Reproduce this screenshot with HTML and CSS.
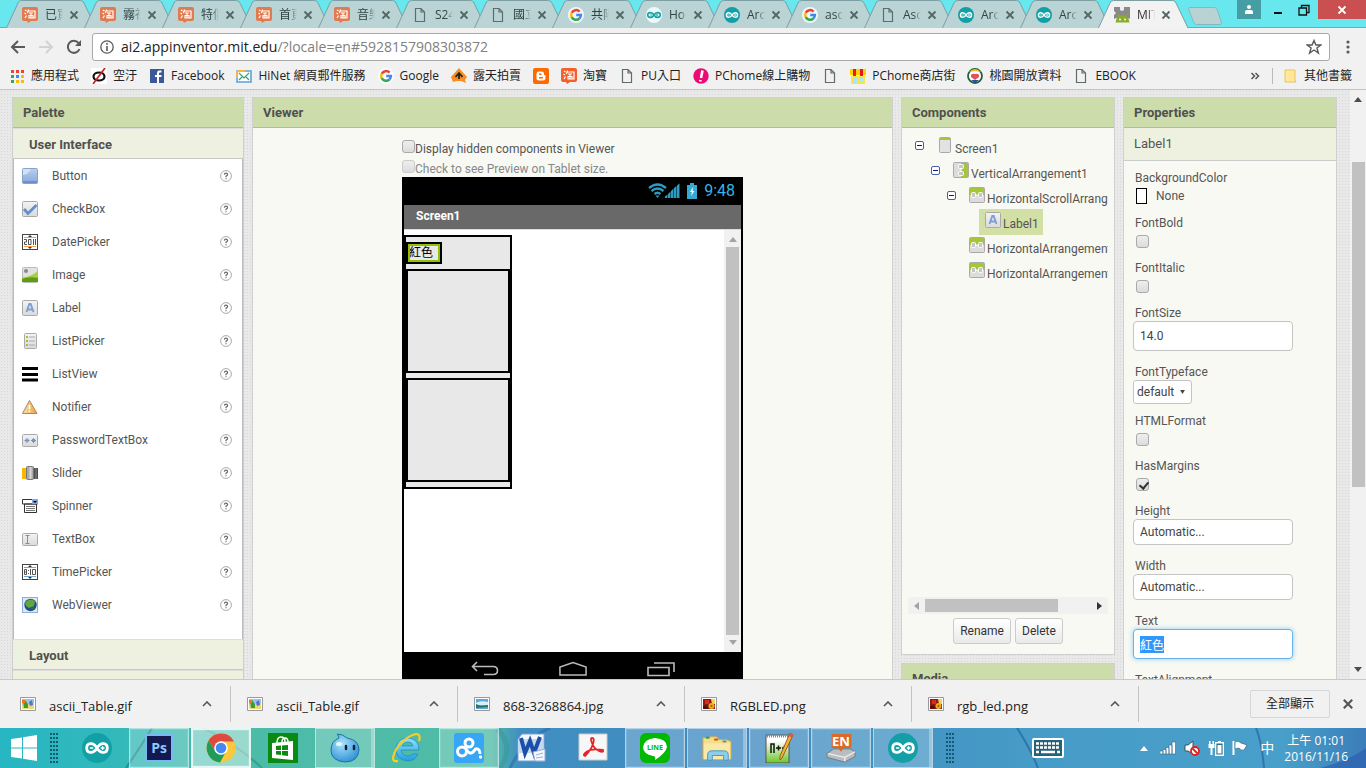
FILE: index.html
```html
<!DOCTYPE html>
<html lang="zh-Hant">
<head>
<meta charset="utf-8">
<title>MIT App Inventor 2</title>
<link rel="stylesheet" href="styles.css">
</head>
<body>
<svg class="defs" aria-hidden="true">
  <defs>
    <linearGradient id="g-blue" x1="0" y1="0" x2="0" y2="1"><stop offset="0" stop-color="#b9cfee"/><stop offset="1" stop-color="#85a9dc"/></linearGradient>
    <linearGradient id="g-grey" x1="0" y1="0" x2="0" y2="1"><stop offset="0" stop-color="#f3f3f3"/><stop offset="1" stop-color="#dadada"/></linearGradient>
    <linearGradient id="g-warn" x1="0" y1="0" x2="1" y2="0"><stop offset="0" stop-color="#fbe3b0"/><stop offset="1" stop-color="#f0a03c"/></linearGradient>
    <linearGradient id="g-np" x1="0" y1="0" x2="0" y2="1"><stop offset=".2" stop-color="#fff"/><stop offset="1" stop-color="#6cc52a"/></linearGradient>
    <radialGradient id="g-drop" cx=".4" cy=".35" r=".8"><stop offset="0" stop-color="#a9e2fb"/><stop offset="1" stop-color="#1c86cf"/></radialGradient>
    <linearGradient id="g-ie" x1="0" y1="0" x2="0" y2="1"><stop offset="0" stop-color="#8fe0fb"/><stop offset="1" stop-color="#1f9fe0"/></linearGradient>
  </defs>
  <symbol id="tab" viewBox="0 0 91 28"><path d="M.5 28 12 3Q13 .5 15.500 .5H74.500Q77 .5 78 3L90 28" stroke="#7d9ea2"/></symbol>
  <symbol id="close" viewBox="0 0 10 10"><path d="M1.500 1.500 8.500 8.500M8.500 1.500 1.500 8.500" fill="none" stroke="currentColor" stroke-width="1.800"/></symbol>
  <symbol id="page" viewBox="0 0 16 16"><path d="M3.500 1.500H9L12.500 5V14.500H3.500ZM9 1.500V5H12.500" fill="none" stroke="#5f6b6d" stroke-width="1.200"/></symbol>
  <symbol id="taobao" viewBox="0 0 16 16"><path d="M2 0H14Q16 0 16 2V12Q16 14 14 14H9L6 16 5 14H2Q0 14 0 12V2Q0 0 2 0Z" fill="currentColor"/><path d="M3 3 4.500 4M2.500 6 4 7M3 11 4.500 8.500M6.500 2.500 5.500 6M6 4H13V11H11M7 6H11M6.500 8.500H11.500M9 6V11M7 9V11H11V9" fill="none" stroke="#fff" stroke-width="1.200"/></symbol>
  <symbol id="google" viewBox="0 0 16 16"><circle cx="8" cy="8" r="8" fill="#fff" fill-opacity=".8"/><g fill="none" stroke-width="2.500"><path d="M11.600 4.600A4.900 4.900 0 0 0 3.700 5.800" stroke="#ea4335"/><path d="M3.700 5.700A5 5 0 0 0 3.700 10.300" stroke="#fbbc05"/><path d="M3.700 10.200A4.900 4.900 0 0 0 11.400 11.500" stroke="#34a853"/><path d="M11.400 11.500A5 5 0 0 0 12.900 8H8.200" stroke="#4285f4"/></g></symbol>
  <symbol id="ard" viewBox="0 0 16 16"><circle cx="8" cy="8" r="8" fill="#12a0a6"/><path d="M8 8C6 4.500 2.500 5.200 2.500 8S6 11.500 8 8 13.500 5.200 13.500 8 10 11.500 8 8Z" fill="none" stroke="#fff" stroke-width="1.500"/><path d="M4.200 8H6M10 8H12M11 7V9" stroke="#fff" stroke-width=".7"/></symbol>
  <symbol id="ard-light" viewBox="0 0 16 16"><circle cx="8" cy="8" r="8" fill="#eafafa"/><path d="M8 8C6 4.500 1.700 5.200 1.700 8S6 11.500 8 8 14.300 5.200 14.300 8 10 11.500 8 8Z" fill="none" stroke="#17a2a8" stroke-width="1.600"/><path d="M3.800 8H6M10 8H12M11 7V9" stroke="#17a2a8" stroke-width=".8"/></symbol>
  <symbol id="mit" viewBox="0 0 16 16"><path d="M0 0H16V12H0V8L2 6 0 4Z" fill="#8a8a8a"/><path d="M6 0V3L8 4 10 3V0Z" fill="#eee"/><path d="M0 16V12L2 11H14L16 12V16Z" fill="#f2f2f2"/><path d="M1.500 15.500Q2 8.500 8.500 8.500T15.500 15.500Z" fill="#8aad2c"/><path d="M4 7 5.500 10M13 7 11.500 10" stroke="#8aad2c"/><circle cx="6" cy="12.500" r=".9" fill="#fff"/><circle cx="11" cy="12.500" r=".9" fill="#fff"/></symbol>
  <symbol id="help" viewBox="0 0 12 12"><circle cx="6" cy="6" r="5.400" fill="#fff" stroke="#aaa"/><path d="M4.400 4.600Q4.500 3.200 6 3.200T7.600 4.500Q7.600 5.300 6 6.200V7.200M6 8.200V9.300" fill="none" stroke="#666" stroke-width="1.200"/></symbol>
  <symbol id="label" viewBox="0 0 16 16"><rect x=".5" y=".5" width="15" height="15" rx="1" fill="url(#g-grey)" stroke="#aaa"/><path d="M4.500 12 7.300 4H8.700L11.500 12M5.800 9.500H10.200" fill="none" stroke="#7e9fd3" stroke-width="1.900"/></symbol>
  <symbol id="harr" viewBox="0 0 16 16"><rect x=".5" y=".5" width="15" height="15" rx="1" fill="#dcdcdc" stroke="#aaa"/><path d="M1 1H15V8H1Z" fill="#a5c639"/><path d="M6 8H10" stroke="#fff"/><rect x="2.500" y="5.500" width="4" height="5" rx="1" fill="#c6c6c6" stroke="#fff"/><rect x="9.500" y="5.500" width="4" height="5" rx="1" fill="#c6c6c6" stroke="#fff"/></symbol>
  <symbol id="minus" viewBox="0 0 9 9"><rect x=".5" y=".5" width="8" height="8" rx="1.500" fill="#fff" stroke="#4560a8"/><path d="M2 4.500H7" stroke="#0a1e8c"/></symbol>
  <symbol id="chev" viewBox="0 0 10 6"><path d="M1 5 5 1 9 5" fill="none" stroke="#555" stroke-width="1.600"/></symbol>
  <symbol id="pic" viewBox="0 0 16 14"><path d="M.5 .5H15.500V13.500H.5Z" fill="#fff" stroke="#999"/><path d="M2 2H14V12H2Z" fill="#9cc3e8"/><path d="M2 8 6 5 10 8 14 6V12H2Z" fill="#ecd878"/><path d="M3 4 5 3 8 7V11H4Z" fill="#3c9c35"/><path d="M2 3H5V6H2Z" fill="#e97a1f"/><path d="M9 5 12 3 13 8 10 9Z" fill="#5474cf"/></symbol>
  <symbol id="pic-sea" viewBox="0 0 16 14"><path d="M.5 .5H15.500V13.500H.5Z" fill="#fff" stroke="#999"/><path d="M2 2H14V12H2Z" fill="#5da8dd"/><path d="M2 6Q6 3 14 5V8H2Z" fill="#d9eefa"/><path d="M2 7 7 9 14 8V10L2 11Z" fill="#27766e"/></symbol>
  <symbol id="pic-red" viewBox="0 0 16 14"><path d="M.5 .5H15.500V13.500H.5Z" fill="#fff" stroke="#999"/><path d="M2 2H14V12H2Z" fill="#8c1b12"/><path d="M4 3H8V7H4Z" fill="#d92b1c"/><path d="M10 2H14V7H11Z" fill="#f4d35a"/><circle cx="10.500" cy="9" r="3" fill="#efa81c"/><circle cx="10.500" cy="9" r="1" fill="#8a5a10"/><path d="M2 9 6 8 7 12H2Z" fill="#551009"/></symbol>
</svg>

<header class="browser">
  <div class="tabstrip">
    <nav class="tabs" aria-label="Tabs">
      <div class="tab"><svg class="tab-bg"><use href="#tab"/></svg><svg class="fav tb"><use href="#taobao"/></svg><a href="#t1">已買</a><button aria-label="Close"><svg><use href="#close"/></svg></button></div>
      <div class="tab"><svg class="tab-bg"><use href="#tab"/></svg><svg class="fav tb"><use href="#taobao"/></svg><a href="#t2">霧社</a><button aria-label="Close"><svg><use href="#close"/></svg></button></div>
      <div class="tab"><svg class="tab-bg"><use href="#tab"/></svg><svg class="fav tb"><use href="#taobao"/></svg><a href="#t3">特價</a><button aria-label="Close"><svg><use href="#close"/></svg></button></div>
      <div class="tab"><svg class="tab-bg"><use href="#tab"/></svg><svg class="fav tb"><use href="#taobao"/></svg><a href="#t4">首頁</a><button aria-label="Close"><svg><use href="#close"/></svg></button></div>
      <div class="tab"><svg class="tab-bg"><use href="#tab"/></svg><svg class="fav tb"><use href="#taobao"/></svg><a href="#t5">音樂</a><button aria-label="Close"><svg><use href="#close"/></svg></button></div>
      <div class="tab"><svg class="tab-bg"><use href="#tab"/></svg><svg class="fav"><use href="#page"/></svg><a href="#t6">S24</a><button aria-label="Close"><svg><use href="#close"/></svg></button></div>
      <div class="tab"><svg class="tab-bg"><use href="#tab"/></svg><svg class="fav"><use href="#page"/></svg><a href="#t7">國立</a><button aria-label="Close"><svg><use href="#close"/></svg></button></div>
      <div class="tab"><svg class="tab-bg"><use href="#tab"/></svg><svg class="fav"><use href="#google"/></svg><a href="#t8">共陽</a><button aria-label="Close"><svg><use href="#close"/></svg></button></div>
      <div class="tab"><svg class="tab-bg"><use href="#tab"/></svg><svg class="fav"><use href="#ard-light"/></svg><a href="#t9">Ho</a><button aria-label="Close"><svg><use href="#close"/></svg></button></div>
      <div class="tab"><svg class="tab-bg"><use href="#tab"/></svg><svg class="fav"><use href="#ard"/></svg><a href="#t10">Arc</a><button aria-label="Close"><svg><use href="#close"/></svg></button></div>
      <div class="tab"><svg class="tab-bg"><use href="#tab"/></svg><svg class="fav"><use href="#google"/></svg><a href="#t11">asc</a><button aria-label="Close"><svg><use href="#close"/></svg></button></div>
      <div class="tab"><svg class="tab-bg"><use href="#tab"/></svg><svg class="fav"><use href="#page"/></svg><a href="#t12">Asc</a><button aria-label="Close"><svg><use href="#close"/></svg></button></div>
      <div class="tab"><svg class="tab-bg"><use href="#tab"/></svg><svg class="fav"><use href="#ard"/></svg><a href="#t13">Arc</a><button aria-label="Close"><svg><use href="#close"/></svg></button></div>
      <div class="tab"><svg class="tab-bg"><use href="#tab"/></svg><svg class="fav"><use href="#ard"/></svg><a href="#t14">Arc</a><button aria-label="Close"><svg><use href="#close"/></svg></button></div>
      <div class="tab current"><svg class="tab-bg"><use href="#tab"/></svg><svg class="fav"><use href="#mit"/></svg><a href="#t15">MIT</a><button aria-label="Close"><svg><use href="#close"/></svg></button></div>
    </nav>
    <button class="newtab" aria-label="New tab"><svg viewBox="0 0 34 18"><path d="M2 .5H26Q28 .5 29 2L33.500 16Q33.500 17.500 32 17.500H9Q7 17.500 6 16L.5 2Q.5 .5 2 .5Z" fill="#b9d3d5" stroke="#86b9be"/></svg></button>
    <div class="winctl">
      <button class="user" aria-label="User"><svg viewBox="0 0 12 12"><circle cx="6" cy="3" r="2" fill="#fff"/><path d="M2 10V8Q2 6 4 6H8Q10 6 10 8V10Z" fill="#fff"/></svg></button>
      <button class="min" aria-label="Minimize"><svg viewBox="0 0 12 12"><path d="M2 9H10" stroke="#111" stroke-width="2"/></svg></button>
      <button class="max" aria-label="Restore"><svg viewBox="0 0 12 12"><path d="M1 4H8.500V11H1ZM3.500 4V1.500H11V8.500H8.500" fill="none" stroke="#111" stroke-width="1.300"/></svg></button>
      <button class="x" aria-label="Close window"><svg viewBox="0 0 10 10"><use href="#close"/></svg></button>
    </div>
  </div>
  <div class="toolbar">
    <button aria-label="Back"><svg viewBox="0 0 16 16"><path d="M15 8H2M8 2 2 8 8 14" fill="none" stroke="#5a5a5a" stroke-width="2"/></svg></button>
    <button aria-label="Forward"><svg viewBox="0 0 16 16"><path d="M1 8H14M8 2 14 8 8 14" fill="none" stroke="#d3d3d3" stroke-width="2"/></svg></button>
    <button aria-label="Reload"><svg viewBox="0 0 16 16"><path d="M13.500 10A6 6 0 1 1 12.500 4" fill="none" stroke="#5a5a5a" stroke-width="2"/><path d="M15 1V7H9Z" fill="#5a5a5a"/></svg></button>
    <div class="address">
      <svg viewBox="0 0 14 14"><circle cx="7" cy="7" r="6.200" fill="none" stroke="#5a5a5a" stroke-width="1.300"/><path d="M7 6V11M7 3V4.800" stroke="#5a5a5a" stroke-width="1.600"/></svg>
      <span class="url">ai2.appinventor.mit.edu<i>/?locale=en#5928157908303872</i></span>
      <button aria-label="Bookmark"><svg viewBox="0 0 16 16"><path d="M8 1.500 9.900 6H14.800L10.900 9 12.400 14 8 11 3.600 14 5.100 9 1.200 6H6.100Z" fill="none" stroke="#5a5a5a" stroke-width="1.400"/></svg></button>
    </div>
    <button class="more" aria-label="Menu"><svg viewBox="0 0 4 14"><circle cx="2" cy="2" r="1.600"/><circle cx="2" cy="7" r="1.600"/><circle cx="2" cy="12" r="1.600"/></svg></button>
  </div>
  <nav class="bookmarks" aria-label="Bookmarks">
    <a href="#b1"><svg viewBox="0 0 16 16"><path d="M2 2H5V5H2ZM7 2H10V5H7ZM12 2H15V5H12Z" fill="#ea4335"/><path d="M2 7H5V10H2ZM2 12H5V15H2Z" fill="#34a853"/><path d="M7 7H10V10H7Z" fill="#4285f4"/><path d="M12 7H15V10H12ZM12 12H15V15H12ZM7 12H10V15H7Z" fill="#fbbc05"/></svg>應用程式</a>
    <a href="#b2"><svg viewBox="0 0 16 16"><path d="M0 0H16V16H0Z" fill="#fff"/><ellipse cx="8" cy="8.500" rx="5.500" ry="4" fill="none" stroke="#111" stroke-width="2.200"/><path d="M2 16 14 0" stroke="#c92222" stroke-width="1.700"/></svg>空汙</a>
    <a href="#b3"><svg viewBox="0 0 16 16"><path d="M1 1H15V15H1Z" fill="#3b5998"/><path d="M10 15V9H12.500V7H10V5.500Q10 4.500 11 4.500H12.500V2.500H10.500Q8 2.500 8 5V7H6V9H8V15Z" fill="#fff"/></svg>Facebook</a>
    <a href="#b4"><svg viewBox="0 0 16 16"><path d="M1 3H15V14H1Z" fill="#fff" stroke="#5ba3d4" stroke-width="1.600"/><path d="M1 3H9M1 3V10" fill="none" stroke="#f6b545" stroke-width="1.800"/><path d="M3 5 8 10 13 5M3 12 6 9M13 12 10 9" fill="none" stroke="#3f9f74" stroke-width="1.200"/></svg>HiNet 網頁郵件服務</a>
    <a href="#b5"><svg><use href="#google"/></svg>Google</a>
    <a href="#b6"><svg viewBox="0 0 16 16"><path d="M8 0 16 9 14 12 15 15 10 13H6L2 14 0 9Z" fill="#f98e1e"/><path d="M4.500 9 8 5 11.500 9M8 6V11" fill="none" stroke="#222" stroke-width="1.800"/></svg>露天拍賣</a>
    <a href="#b7" aria-label="Blogger"><svg viewBox="0 0 16 16"><rect width="16" height="16" rx="2" fill="#ff6a00"/><path d="M6 3.500H8.500Q11 3.500 11 6V7H12.500V10Q12.500 12.500 10 12.500H6Q3.500 12.500 3.500 10V6Q3.500 3.500 6 3.500Z" fill="#fff"/><path d="M6 6.200H8.500M6 9.800H10" stroke="#ff6a00" stroke-width="1.500"/></svg></a>
    <a href="#b8"><svg class="tb hot"><use href="#taobao"/></svg>淘寶</a>
    <a href="#b9"><svg><use href="#page"/></svg>PU入口</a>
    <a href="#b10"><svg viewBox="0 0 16 16"><circle cx="8" cy="8" r="7.700" fill="#ea0b74"/><path d="M9.500 2.500 8 10M7.500 12 7.200 13.500" stroke="#fff" stroke-width="2.600"/></svg>PChome線上購物</a>
    <a href="#b11" aria-label="Page"><svg><use href="#page"/></svg></a>
    <a href="#b12"><svg viewBox="0 0 16 16"><path d="M0 1H16V7H0Z" fill="#ffd200"/><path d="M3 1H6V8H3ZM10 1H13V8H10Z" fill="#e41a1a"/><path d="M1 8H15V16H1Z" fill="#ffe24a"/><path d="M3 9H7V16H3ZM9 9H13V13H9Z" fill="#a5e8f3"/></svg>PChome商店街</a>
    <a href="#b13"><svg viewBox="0 0 16 16"><circle cx="8" cy="8" r="7" fill="#fff" stroke="#24603a" stroke-width="1.800"/><path d="M2 4Q8-2 14 4L8 3Z" fill="#e3c434"/><path d="M4 7Q5 5 8 6 11 5 12 7V9L8 12 4 9Z" fill="#e4505c"/><path d="M4 12 8 15 12 12" fill="#29509a"/></svg>桃園開放資料</a>
    <a href="#b14"><svg><use href="#page"/></svg>EBOOK</a>
    <button class="overflow" aria-label="More bookmarks"><svg viewBox="0 0 10 10"><path d="M1.500 2 4.500 5 1.500 8M5.500 2 8.500 5 5.500 8" fill="none" stroke="#555" stroke-width="1.500"/></svg></button>
    <a class="other" href="#b15"><svg viewBox="0 0 16 16"><path d="M3 2H13V12L14 14H3Z" fill="#ffe79b" stroke="#e8c65a"/></svg>其他書籤</a>
  </nav>
</header>

<main class="viewport">
  <div class="workspace">
    <section class="panel">
      <h2>Palette</h2>
      <h3>User Interface</h3>
      <ul class="palette">
        <li><svg viewBox="0 0 16 16"><rect x=".5" y=".5" width="15" height="15" rx="1" fill="url(#g-blue)" stroke="#8aa3c8"/><path d="M1 1H9Q7 6 1 7Z" fill="#d3e1f5"/><path d="M1 14H15" stroke="#5f88c4" stroke-width="1.500"/></svg><a href="#c1">Button</a><svg class="help"><use href="#help"/></svg></li>
        <li><svg viewBox="0 0 16 16"><rect x=".5" y=".5" width="15" height="15" rx="1" fill="url(#g-grey)" stroke="#aaa"/><path d="M2 8 6 12.500 14.500 4" fill="none" stroke="#648fcf" stroke-width="2.800"/></svg><a href="#c2">CheckBox</a><svg class="help"><use href="#help"/></svg></li>
        <li><svg viewBox="0 0 16 16"><rect x=".5" y=".5" width="15" height="15" fill="#fff" stroke="#444"/><path d="M2 3.500H14M2 12.500H14" stroke="#f2a14a"/><path d="M6 3 8 1 10 3ZM6 13 8 15 10 13Z" fill="#333"/><path d="M2 5.500H4.500V8H2.500V10.500H5M6.500 5.500H9V10.500H6.500ZM11.500 5V11M13.500 5V11" fill="none" stroke="#555"/></svg><a href="#c3">DatePicker</a><svg class="help"><use href="#help"/></svg></li>
        <li><svg viewBox="0 0 16 16"><rect x=".5" y=".5" width="15" height="15" rx="1" fill="#e2e2e2" stroke="#bbb"/><circle cx="4" cy="4" r="2" fill="#888"/><path d="M0 10Q7 11 16 4V15H0Z" fill="#a7cf45"/><path d="M0 12Q7 9 16 11V15H0Z" fill="#5f9c0e"/></svg><a href="#c4">Image</a><svg class="help"><use href="#help"/></svg></li>
        <li><svg><use href="#label"/></svg><a href="#c5">Label</a><svg class="help"><use href="#help"/></svg></li>
        <li><svg viewBox="0 0 16 16"><rect x="2.500" y=".5" width="12" height="15" rx="1" fill="url(#g-grey)" stroke="#aaa"/><path d="M4 3H6V5H4ZM4 7H6V9H4ZM4 11H6V13H4Z" fill="#9dc433"/><path d="M7 4H13M7 8H13M7 12H13" stroke="#aaa"/></svg><a href="#c6">ListPicker</a><svg class="help"><use href="#help"/></svg></li>
        <li><svg viewBox="0 0 16 16"><path d="M0 2.500H16M0 8.500H16M0 14H16" stroke="#000" stroke-width="3"/></svg><a href="#c7">ListView</a><svg class="help"><use href="#help"/></svg></li>
        <li><svg viewBox="0 0 16 16"><path d="M7.500 1.500 15 14.500H.5Z" fill="url(#g-warn)" stroke="#a58a5c"/><path d="M7.500 6V10M7.500 11.500V13" stroke="#fff" stroke-width="1.600"/></svg><a href="#c8">Notifier</a><svg class="help"><use href="#help"/></svg></li>
        <li><svg viewBox="0 0 16 16"><rect x=".5" y="2.500" width="15" height="12" rx="1" fill="url(#g-grey)" stroke="#aaa"/><path d="M5 6V11M2.500 8.500H7.500M3.500 7 6.500 10M6.500 7 3.500 10M11.500 6V11M9 8.500H14M10 7 13 10M13 7 10 10" stroke="#7394cb"/></svg><a href="#c9">PasswordTextBox</a><svg class="help"><use href="#help"/></svg></li>
        <li><svg viewBox="0 0 16 16"><path d="M0 3H5V14H0Z" fill="#f6b900"/><path d="M11 3H16V14H11Z" fill="#4d4d4d"/><path d="M14 3V14" stroke="#888"/><rect x="4.500" y="1.500" width="7" height="13" rx="1" fill="#aaa" stroke="#777"/><path d="M8.500 2V14" stroke="#d8d8d8" stroke-width="2"/></svg><a href="#c10">Slider</a><svg class="help"><use href="#help"/></svg></li>
        <li><svg viewBox="0 0 16 16"><path d="M.5 1.500H15.500V6H.5ZM2.500 6H14.500V14.500H2.500Z" fill="#fff" stroke="#333"/><path d="M10 1H16V6H10Z" fill="#83a4dd"/><path d="M11 3H15L13 5Z" fill="#000"/><path d="M4 8.500H13M4 10.500H13M4 12.500H13" stroke="#777"/></svg><a href="#c11">Spinner</a><svg class="help"><use href="#help"/></svg></li>
        <li><svg viewBox="0 0 16 16"><rect x=".5" y="2.500" width="15" height="12" rx="1" fill="url(#g-grey)" stroke="#aaa"/><path d="M3.500 4.500H7.500M5.500 4.500V12.500M3.500 12.500H7.500" stroke="#738fbd"/></svg><a href="#c12">TextBox</a><svg class="help"><use href="#help"/></svg></li>
        <li><svg viewBox="0 0 16 16"><rect x=".5" y=".5" width="15" height="15" fill="#fff" stroke="#444"/><path d="M2 3.500H14M2 12.500H14" stroke="#6ea5d6"/><path d="M6 3 8 1 10 3ZM6 13 8 15 10 13Z" fill="#333"/><path d="M2.500 5.500H4.500V10.500H2.500ZM2.500 8H4.500M6.500 6V7M6.500 9V10M8.500 5V11M10.500 5.500H13.500V10.500H10.500Z" fill="none" stroke="#555"/></svg><a href="#c13">TimePicker</a><svg class="help"><use href="#help"/></svg></li>
        <li><svg viewBox="0 0 16 16"><rect x=".5" y=".5" width="15" height="15" fill="#dce8f5" stroke="#8eafd8"/><circle cx="8.500" cy="8" r="6.200" fill="#224e8a"/><path d="M3 6Q7 0 13 4L12 9 7 11 4 9Z" fill="#5fa83a"/><path d="M8 11 13 10 11 13Z" fill="#2f7024"/></svg><a href="#c14">WebViewer</a><svg class="help"><use href="#help"/></svg></li>
      </ul>
      <h3>Layout</h3>
      <h3>Media</h3>
    </section>

    <section class="panel viewer">
      <h2>Viewer</h2>
      <div class="stage">
        <label class="opt"><input type="checkbox"><span>Display hidden components in Viewer</span></label>
        <label class="opt off"><input type="checkbox" disabled><span>Check to see Preview on Tablet size.</span></label>
        <div class="phone">
          <div class="status">
            <svg class="wifi" viewBox="0 0 32 16"><g fill="none" stroke="#2d9cc4" stroke-width="2.300"><path d="M1 5Q9.500-2 18 5M3.500 8Q9.500 3 15.500 8M6.500 11Q9.500 8.500 12.500 11"/></g><path d="M7.500 12.500H11.500L9.500 15Z" fill="#2d9cc4"/><path d="M17 15V13.500L19.500 11.500V15ZM20 15V11L22.500 8.500V15ZM23 15V8L25.500 5.500V15ZM26 15V5L28.500 3V15ZM29 15V2.500L31.500 .5V15Z" fill="#2d9cc4"/></svg>
            <svg class="batt" viewBox="0 0 10 16"><path d="M0 2H3V0H7V2H10V16H0Z" fill="#37a9d3"/><path d="M6 4 3 9H5L4 13 7.500 8H5.500Z" fill="#fff"/></svg>
            <span>9:48</span>
          </div>
          <div class="title">Screen1</div>
          <div class="screen">
            <div class="canvas">
              <div class="varr">
                <div class="hscroll"><span class="picked">紅色</span></div>
                <div class="harr"></div>
                <div class="harr"></div>
              </div>
            </div>
            <div class="vbar dim"><svg viewBox="0 0 8 5"><path d="M0 5 4 0 8 5Z"/></svg><div class="thumb"></div><svg viewBox="0 0 8 5"><path d="M0 0 4 5 8 0Z"/></svg></div>
          </div>
          <div class="keys">
            <svg viewBox="0 0 28 16"><path d="M6 1 1.500 5.500 6 10M1.500 5.500H22Q26.500 5.500 26.500 9.500T22 13.500H13" fill="none" stroke="#bbb" stroke-width="1.600"/></svg>
            <svg viewBox="0 0 30 16"><path d="M1 14.500V6L15 1 29 6V14.500Z" fill="none" stroke="#bbb" stroke-width="1.600"/></svg>
            <svg viewBox="0 0 28 16"><path d="M1 6.500H22V14.500H1ZM7 2H27V11" fill="none" stroke="#bbb" stroke-width="1.600"/></svg>
          </div>
        </div>
      </div>
    </section>

    <div class="column">
      <section class="panel">
        <h2>Components</h2>
        <div class="tree">
          <ul>
            <li><div class="row"><svg class="tog"><use href="#minus"/></svg><a class="node" href="#n1"><svg viewBox="0 0 16 16"><rect x="2.500" y=".5" width="11" height="15" rx="1" fill="#e2e2e2" stroke="#aaa"/><path d="M3 1H13V3H3Z" fill="#a5c639"/></svg><span>Screen1</span></a></div>
              <ul>
                <li><div class="row"><svg class="tog"><use href="#minus"/></svg><a class="node" href="#n2"><svg viewBox="0 0 16 16"><rect x=".5" y=".5" width="15" height="15" rx="1" fill="#dcdcdc" stroke="#aaa"/><path d="M8 1H15V15H8Z" fill="#a5c639"/><path d="M8 6V10" stroke="#fff"/><rect x="5.500" y="2.500" width="5" height="4" rx="1" fill="#c6c6c6" stroke="#fff"/><rect x="5.500" y="9.500" width="5" height="4" rx="1" fill="#c6c6c6" stroke="#fff"/></svg><span>VerticalArrangement1</span></a></div>
                  <ul>
                    <li><div class="row"><svg class="tog"><use href="#minus"/></svg><a class="node" href="#n3"><svg><use href="#harr"/></svg><span>HorizontalScrollArrangement1</span></a></div>
                      <ul><li><div class="row"><i class="tog"></i><a class="node sel" href="#n4"><svg><use href="#label"/></svg><span>Label1</span></a></div></li></ul>
                    </li>
                    <li><div class="row"><i class="tog"></i><a class="node" href="#n5"><svg><use href="#harr"/></svg><span>HorizontalArrangement1</span></a></div></li>
                    <li><div class="row"><i class="tog"></i><a class="node" href="#n6"><svg><use href="#harr"/></svg><span>HorizontalArrangement2</span></a></div></li>
                  </ul>
                </li>
              </ul>
            </li>
          </ul>
        </div>
        <div class="hbar"><svg class="faint" viewBox="0 0 5 8"><path d="M5 0 0 4 5 8Z"/></svg><div class="track"><div class="thumb"></div></div><svg viewBox="0 0 5 8"><path d="M0 0 5 4 0 8Z"/></svg></div>
        <div class="actions"><button>Rename</button><button>Delete</button></div>
      </section>
      <section class="panel"><h2>Media</h2></section>
    </div>

    <section class="panel">
      <h2>Properties</h2>
      <p class="subject">Label1</p>
      <form class="props">
        <div class="prop"><label for="bg">BackgroundColor</label><button type="button" id="bg" class="color"><i></i>None</button></div>
        <div class="prop"><label for="bold">FontBold</label><div class="check"><input type="checkbox" id="bold"></div></div>
        <div class="prop"><label for="ital">FontItalic</label><div class="check"><input type="checkbox" id="ital"></div></div>
        <div class="prop wide"><label for="size">FontSize</label><input type="text" id="size" value="14.0"></div>
        <div class="prop"><label for="face">FontTypeface</label><div class="select"><select id="face"><option>default</option></select><svg viewBox="0 0 6 5"><path d="M0 0H6L3 5Z"/></svg></div></div>
        <div class="prop"><label for="html">HTMLFormat</label><div class="check"><input type="checkbox" id="html"></div></div>
        <div class="prop"><label for="marg">HasMargins</label><div class="check"><input type="checkbox" id="marg" checked></div></div>
        <div class="prop wide"><label for="hgt">Height</label><button type="button" class="dim-btn" id="hgt">Automatic...</button></div>
        <div class="prop wide"><label for="wid">Width</label><button type="button" class="dim-btn" id="wid">Automatic...</button></div>
        <div class="prop wide"><label for="txt">Text</label><input type="text" id="txt" value="紅色"></div>
        <div class="prop"><label for="align">TextAlignment</label><div class="select"><select id="align"><option>left</option></select></div></div>
      </form>
    </section>
  </div>
  <div class="vbar page-bar"><svg viewBox="0 0 8 5"><path d="M0 5 4 0 8 5Z"/></svg><div class="track"><div class="thumb"></div></div><svg viewBox="0 0 8 5"><path d="M0 0 4 5 8 0Z"/></svg></div>
</main>

<section class="downloads" aria-label="Downloads">
  <div class="file"><svg viewBox="0 0 16 14"><use href="#pic"/></svg><a href="#d1">ascii_Table.gif</a><button aria-label="Options"><svg><use href="#chev"/></svg></button></div>
  <div class="file"><svg viewBox="0 0 16 14"><use href="#pic"/></svg><a href="#d2">ascii_Table.gif</a><button aria-label="Options"><svg><use href="#chev"/></svg></button></div>
  <div class="file"><svg viewBox="0 0 16 14"><use href="#pic-sea"/></svg><a href="#d3">868-3268864.jpg</a><button aria-label="Options"><svg><use href="#chev"/></svg></button></div>
  <div class="file"><svg viewBox="0 0 16 14"><use href="#pic-red"/></svg><a href="#d4">RGBLED.png</a><button aria-label="Options"><svg><use href="#chev"/></svg></button></div>
  <div class="file"><svg viewBox="0 0 16 14"><use href="#pic-red"/></svg><a href="#d5">rgb_led.png</a><button aria-label="Options"><svg><use href="#chev"/></svg></button></div>
  <button class="all">全部顯示</button>
  <button class="dismiss" aria-label="Close"><svg><use href="#close"/></svg></button>
</section>

<footer class="taskbar">
  <svg class="wall" viewBox="0 0 1366 40" preserveAspectRatio="none" aria-hidden="true"><path d="M126 40Q140 20 152 0" fill="none" stroke="#1f6f73" stroke-opacity=".6" stroke-width="2"/><path d="M203 0Q235 15 262 40" fill="none" stroke="#2b7f7c" stroke-opacity=".5" stroke-width="2"/><path d="M497 0Q515 20 500 40" fill="none" stroke="#3a9aa0" stroke-opacity=".7" stroke-width="5"/><path d="M510 40Q525 10 550 0" fill="none" stroke="#2c5fae" stroke-opacity=".5" stroke-width="3"/><path d="M1017 0Q1030 20 1038 40M1256 0Q1262 15 1264 40" fill="none" stroke="#1d5b9c" stroke-opacity=".6" stroke-width="2"/><path d="M1320 40Q1348 33 1366 20V40Z" fill="#2c5fae" fill-opacity=".7"/></svg>
  <button class="start" aria-label="Start"><svg viewBox="0 0 26 26"><path d="M0 4 11 2.500V12.500H0ZM12 2.300 26 0V12.500H12ZM0 13.500H11V23.500L0 22ZM12 13.500H26V26L12 23.700Z" fill="#fff"/></svg></button>
  <i class="grip"></i>
  <div class="apps">
    <button aria-label="Arduino"><svg viewBox="0 0 16 16"><use href="#ard"/></svg></button>
    <button class="run" aria-label="Photoshop"><svg viewBox="0 0 30 30"><path d="M2 2H28V28H2Z" fill="#14194f" stroke="#78b8f5" stroke-width="2"/><text x="15" y="20" text-anchor="middle" class="ps">Ps</text></svg></button>
    <button class="run on" aria-label="Chrome"><svg viewBox="0 0 30 30"><circle cx="15" cy="15" r="14.500" fill="#fbc83c"/><path d="M2.500 7.800A14.500 14.500 0 0 0 14 29.500L20 18.500 15 15 9.500 18Z" fill="#219c58"/><path d="M15 8.500H28A14.500 14.500 0 0 0 2.500 7.800L9.500 18Z" fill="#dd4b3e"/><circle cx="15" cy="15" r="6.800" fill="#fff"/><circle cx="15" cy="15" r="5.300" fill="#4688f1"/></svg></button>
    <button aria-label="Store"><svg viewBox="0 0 30 30"><path d="M0 0H30V30H0Z" fill="#0a8a10"/><path d="M4 10 25 8V27L4 25Z" fill="#fff"/><path d="M9 10Q9 4 13 4T17 9M14 9Q14 5 17 5T20 9" fill="none" stroke="#fff" stroke-width="1.500"/><path d="M8 13 13 12.500V17H8ZM14 12.400 20 12V17H14ZM8 18H13V22L8 21.500ZM14 18H20V23L14 22.300Z" fill="#0a8a10"/></svg></button>
    <button class="run multi" aria-label="Aliwangwang"><svg viewBox="0 0 30 30"><path d="M7 1Q13 1 17 5 29 7 29 17 28 29 15 29 1 28 1 17 1 8 9 5Q9 3 7 1Z" fill="url(#g-drop)" stroke="#1b73a8"/><path d="M16 13V16M24 13V16" stroke="#123" stroke-width="2.500" stroke-linecap="round"/><ellipse cx="9" cy="11" rx="3" ry="2" fill="#e5f7ff"/></svg></button>
    <button aria-label="Internet Explorer"><svg viewBox="0 0 30 30"><path d="M27 17H9Q10 23 16 23 19 23 21 21H26Q23 28 16 28 4 27 4 16 5 5 16 5 27 6 27 17ZM10 13H21Q20 9 16 9T10 13Z" fill="url(#g-ie)" stroke="#1f85c0" stroke-width=".7"/><path d="M27 8Q29 2 25 1 20 1 11 8 2 17 1 25 1 29 6 28" fill="none" stroke="#f5cf25" stroke-width="2.200"/></svg></button>
    <button class="run" aria-label="Baidu"><svg viewBox="0 0 30 30"><rect width="30" height="30" rx="3" fill="#37a6f5"/><g fill="none" stroke="#fff" stroke-width="3"><circle cx="15" cy="10" r="4"/><circle cx="8" cy="18.500" r="4.500"/><path d="M12 16Q16 23 20 18 22 14 25 17 26 18 26 21"/></g><circle cx="26.500" cy="24" r="1.700" fill="#fff"/></svg></button>
    <button aria-label="Word"><svg viewBox="0 0 30 30"><path d="M6 1H28V28H2V6Z" fill="#f4f8ff" stroke="#7f9fd0"/><path d="M2 6H27V20H2Z" fill="#c5d8f2"/><path d="M5 5 9 20 14 8 18 20 24 4" fill="none" stroke="#1c50a8" stroke-width="4"/><path d="M17 19 29 16V28H19Z" fill="#f4f8ff" stroke="#98acd0"/><path d="M20 22 27 20M20 25 27 24" stroke="#9ab0d8"/></svg></button>
    <button aria-label="Acrobat"><svg viewBox="0 0 30 30"><path d="M1 1H29V27H1Z" fill="#f7f7f7" stroke="#ccc"/><path d="M14 5Q17 5 15 11T7 23Q4 22 9 18.500T25 17Q26 20 21 18T14 10Q12 5 14 5Z" fill="none" stroke="#e0262a" stroke-width="1.800"/></svg></button>
    <button class="run" aria-label="LINE"><svg viewBox="0 0 30 30"><rect width="30" height="30" rx="6" fill="#00b900"/><path d="M15 5Q27 6 27 14 26 20 15 27 16 23 13 23 3 21 3 14 4 6 15 5Z" fill="#fff"/><text x="15" y="17" text-anchor="middle" class="line">LINE</text></svg></button>
    <button class="run multi" aria-label="Explorer"><svg viewBox="0 0 32 30"><path d="M1 4H7L9 3H16L18 6H26L31 8V27H1Z" fill="#f5dd85" stroke="#c8a84d"/><path d="M4 4H8" stroke="#3a9b4a" stroke-width="2"/><path d="M13 6H17" stroke="#d8422c" stroke-width="2"/><path d="M22 8H26" stroke="#3f8fd8" stroke-width="2"/><path d="M2 10H30V27H2Z" fill="#f9e8a6"/><path d="M6 28V22Q6 18 11 18H23Q28 18 28 22V28H23V23H11V28Z" fill="#8bcdec" stroke="#4796bb"/></svg></button>
    <button class="run" aria-label="Notepad++"><svg viewBox="0 0 30 30"><path d="M2 2H25V30H2Z" fill="url(#g-np)" stroke="#555"/><path d="M3 3H24" stroke="#888" stroke-width="3" stroke-dasharray="1 1"/><path d="M7 20V11H10V20M12 15H17M14.500 12.500V17.500M18 15H23M20.500 12.500V17.500" fill="none" stroke="#111" stroke-width="1.500"/><path d="M29 2 18 25 16 27V23L26 0Z" fill="#f2b632" stroke="#9b5a20"/><path d="M26 0 29 2 28 5 25 3Z" fill="#d55"/></svg></button>
    <button class="run" aria-label="Language"><svg viewBox="0 0 32 30"><path d="M1 21 8 16H26L31 19V24L20 30 1 25Z" fill="#b9bdc0" stroke="#777"/><path d="M2 21 20 25 31 19M20 25V29" fill="none" stroke="#eee" stroke-width="1.500"/><path d="M6 0H27V15H19L16 19 13 15H6Z" fill="#d96b27"/><text x="16" y="13" text-anchor="middle" class="en">EN</text></svg></button>
    <button class="run multi" aria-label="Arduino"><svg viewBox="0 0 16 16"><use href="#ard"/></svg></button>
  </div>
  <i class="grip"></i>
  <button class="kbd" aria-label="Keyboard"><svg viewBox="0 0 32 20"><rect x="1" y="1" width="30" height="18" rx="1" fill="#23617e" stroke="#fff" stroke-width="2"/><path d="M4 5.500H28M4 9.500H28" stroke="#fff" stroke-width="2.600" stroke-dasharray="3 1"/><path d="M4 14H7M9 14H23M25 14H28" stroke="#fff" stroke-width="2.600"/></svg></button>
  <div class="tray">
    <svg class="up" viewBox="0 0 8 5"><path d="M0 5 4 0 8 5Z" fill="#fff"/></svg>
    <svg viewBox="0 0 16 16"><path d="M0 11H3V14H0ZM3 9.500H6V14H3ZM6 7.500H9V14H6ZM9 5H12V14H9ZM12 2H15.500V14H12Z" fill="#fff" stroke="#2b6a89" stroke-width=".6"/></svg>
    <svg viewBox="0 0 16 16"><path d="M1 5H4L9 1V14L4 11H1Z" fill="#fff" stroke="#356"/><circle cx="11" cy="11" r="4" fill="#fff" stroke="#e02020" stroke-width="1.800"/><path d="M8.500 8.500 13.500 13.500" stroke="#e02020" stroke-width="1.800"/></svg>
    <svg viewBox="0 0 16 16"><path d="M7.700 2.700H15.300V15.300H7.700Z" fill="#2b6a89" stroke="#fff" stroke-width="1.400"/><path d="M10 1H13V2.500H10ZM9.500 5H13.500V13.500H9.500ZM1 1H2.500V4H4.500V1H6V4H6.500V8H4.500V15H2.500V8H.5V4H1Z" fill="#fff"/></svg>
    <svg viewBox="0 0 16 16"><path d="M1.500 1V15" stroke="#fff" stroke-width="2"/><path d="M3 2Q6 0 9 3L15 5 12 10Q9 11 7 8L3 9Z" fill="#fff" stroke="#356" stroke-width=".6"/></svg>
    <span class="ime">中</span>
    <time>上午 01:01<br>2016/11/16</time>
  </div>
</footer>
<script src="app.js"></script>
</body>
</html>
```
FILE: styles.css
```css
* { box-sizing: border-box; }

body {
  margin: 0;
  height: 100vh;
  display: flex;
  flex-direction: column;
  overflow: hidden;
  background: #f1f1f1;
  color: #222;
  font: 12px/16px "Open Sans", "Noto Sans CJK TC", sans-serif;
}

svg { display: block; flex: none; }
a { color: inherit; text-decoration: none; }
ul { margin: 0; padding: 0; list-style: none; }
h2, h3, p { margin: 0; }
button { border: 0; padding: 0; background: none; color: inherit; font: inherit; display: grid; place-items: center; }
.defs { position: absolute; width: 0; height: 0; }

/* Browser chrome */
.browser { flex: none; border-bottom: 1px solid #c4c4c4; }
.tabstrip { display: flex; height: 28px; padding-left: 6px; background: #68e7ee; border-bottom: 1px solid #84a4a7; }
.tabs { display: flex; }
.tab { position: relative; display: flex; align-items: center; width: 91px; height: 28px; margin-right: -13px; padding: 2px 0 0 16px; color: #344; fill: #bad4d6; }
.tab.current { z-index: 1; color: #333; fill: #f2f2f2; }
.tab-bg { position: absolute; left: 0; top: 0; width: 91px; height: 28px; }
.fav { position: relative; width: 16px; height: 16px; }
.tb { color: #e27a4f; }
.tb.hot { color: #f4602a; }
.tab a { position: relative; width: 18px; margin: 0 6px 0 7px; overflow: hidden; white-space: nowrap; mask-image: linear-gradient(to right, #000 60%, transparent); }
.tab button { position: relative; color: #566; }
.tab button svg { width: 10px; height: 10px; }
.newtab { margin: 7px 0 0 12px; align-self: flex-start; }
.newtab svg { width: 34px; height: 18px; }
.winctl { display: flex; margin-left: auto; align-items: flex-start; }
.winctl button { height: 19px; width: 26px; }
.winctl svg { width: 12px; height: 12px; }
.winctl .user { width: 24px; background: #479da4; margin-right: 4px; }
.winctl .x { width: 48px; margin-left: 1px; background: #c94f50; color: #fff; }
.winctl .x svg { width: 10px; height: 10px; }

.toolbar { display: flex; align-items: center; gap: 12px; height: 34px; padding: 4px 16px 0 10px; }
.toolbar > button svg { width: 16px; height: 16px; }
.toolbar .more svg { width: 4px; height: 14px; fill: #5a5a5a; }
.address { flex: 1; display: flex; align-items: center; gap: 7px; height: 28px; margin-right: 4px; margin-left: -2px; padding: 0 7px; background: #fff; border: 1px solid #a9a9a9; border-radius: 3px; }
.address > svg { width: 14px; height: 14px; }
.address button svg { width: 16px; height: 16px; }
.url { flex: 1; font-size: 14px; line-height: 20px; color: #222; }
.url i { font-style: normal; color: #808080; }

.bookmarks { display: flex; align-items: center; gap: 12px; height: 27px; padding: 0 14px 0 9px; white-space: nowrap; color: #222; }
.bookmarks a { display: flex; align-items: center; gap: 6px; }
.bookmarks svg { width: 16px; height: 16px; }
.bookmarks .overflow { margin-left: auto; }
.bookmarks .overflow svg { width: 10px; height: 10px; }
.bookmarks .other { padding-left: 9px; border-left: 1px solid #bbb; }

/* App Inventor page */
.viewport { flex: 1; min-height: 0; display: flex; overflow: hidden; font: 12px/16px Roboto, "Noto Sans CJK TC", sans-serif; color: #555; }
.workspace {
  flex: 1;
  display: grid;
  grid-template-columns: 232px minmax(0, 1fr) 214px 214px;
  align-items: start;
  gap: 8px;
  padding: 7px 13px 0 12px;
  background-color: #e9e9e9;
  background-image: radial-gradient(#d6d6d6 1px, transparent 1px);
  background-size: 3px 3px;
}
.panel { min-width: 0; border: 1px solid #cfcfcf; background: #f8f9f2; }
.panel h2 { height: 30px; padding: 7px 10px; border-bottom: 1px solid #b2bb9b; background: #ccdcaa; font-size: 13px; line-height: 16px; font-weight: 700; color: #505050; }
.panel h3 { height: 31px; padding: 8px 16px; border-top: 1px solid #ddd; border-bottom: 1px solid #c8c8c8; background: #eef1df; font-size: 13px; line-height: 16px; font-weight: 700; color: #505050; }
.palette { padding-bottom: 18px; background: #fff; border: solid #bbb; border-width: 0 1px; }
.palette li { display: flex; align-items: center; height: 33px; padding: 0 10px 0 8px; }
.palette li > svg { width: 16px; height: 16px; }
.palette a { flex: 1; margin-left: 14px; }
.palette li > .help { width: 12px; height: 12px; }

.stage { display: grid; justify-content: center; grid-template-columns: 341px; padding-top: 9px; }
.opt { display: flex; height: 20px; align-items: flex-end; }
.opt input { align-self: flex-start; margin: 3px 0 0; }
.off { color: #888; }

input[type="checkbox"] { appearance: none; position: relative; flex: none; width: 13px; height: 13px; border: 1px solid #aaa; border-radius: 3px; background: linear-gradient(#eee, #dcdcdc); }
input[type="checkbox"]:disabled { border-color: #ccc; }
input[type="checkbox"]:checked::after { content: ""; position: absolute; left: 4px; top: 1px; width: 4px; height: 7px; border: solid #333; border-width: 0 2px 2px 0; transform: rotate(40deg); }

.phone { border: solid #000; border-width: 0 2px; background: #000; }
.status { display: flex; align-items: center; justify-content: flex-end; gap: 7px; height: 28px; padding-right: 6px; color: #33b5e5; font-size: 16px; line-height: 20px; }
.wifi { width: 32px; height: 16px; }
.batt { width: 10px; height: 16px; }
.title { height: 25px; padding: 3px 12px; background: #696969; border-bottom: 1px solid #ddd; color: #fff; font-weight: 700; }
.screen { display: flex; height: 422px; background: #fff; }
.canvas { flex: 1; padding-top: 5px; }
.varr { width: 108px; border: 2px solid #000; background: #e8e8e8; padding-bottom: 5px; display: grid; gap: 5px; }
.hscroll { height: 27px; padding-top: 5px; }
.picked { display: block; width: 36px; height: 22px; border: 2px solid #000; outline: 2px solid #91c100; outline-offset: -4px; padding-left: 1px; line-height: 19px; color: #000; background: #e8e8e8; }
.harr { height: 104px; border: 2px solid #000; }
.keys { display: flex; justify-content: center; gap: 60px; height: 48px; padding: 9px 0 0; }
.keys svg { width: 28px; height: 16px; }

.vbar { flex: none; display: flex; flex-direction: column; align-items: center; gap: 5px; width: 17px; padding: 7px 0; background: #f1f1f1; }
.vbar svg { width: 8px; height: 5px; fill: #4d4d4d; }
.vbar.dim svg { fill: #a3a3a3; }
.thumb { background: #c1c1c1; }
.vbar > .thumb { flex: 1; width: 13px; }
.page-bar { width: 16px; }
.vbar .track { flex: 1; width: 13px; padding-top: 55px; }
.vbar .track .thumb { height: 58%; min-height: 325px; }

.column { display: grid; gap: 8px; min-width: 0; }
.tree { height: 469px; padding: 6px 0 0 11px; margin-right: 6px; overflow: hidden; }
.tree ul ul { padding-left: 16px; }
.row { display: flex; height: 25px; }
.tog { flex: none; width: 9px; height: 9px; margin: 7px 7px 0 2px; }
.node { flex: none; display: flex; gap: 2px; height: 26px; padding: 3px 4px 0 6px; white-space: nowrap; }
.node svg { width: 16px; height: 16px; }
.node span { padding-top: 4px; }
.sel { background: #d2dfa5; }
.hbar { display: flex; align-items: center; height: 17px; margin: 0 6px; padding: 0 6px; background: #f1f1f1; }
.hbar svg { width: 5px; height: 8px; fill: #333; }
.hbar .faint { fill: #a3a3a3; }
.hbar .track { flex: 1; padding: 0 6px; }
.hbar .thumb { width: 80%; height: 13px; }
.actions { display: flex; justify-content: center; gap: 4px; padding: 4px 0 10px; }
.actions button { height: 26px; padding: 0 6px; border: 1px solid #ccc; border-radius: 3px; background: linear-gradient(#fff, #eaeaea); color: #333; }

.subject { padding: 8px 10px; border-bottom: 1px solid #ccc; background: #eef1df; font-size: 13px; }
.props { padding: 9px 10px 0 9px; }
.prop { display: grid; justify-items: start; padding-bottom: 9px; }
.prop.wide { padding-bottom: 13px; }
.prop label { padding-left: 2px; }
.check { height: 20px; padding: 4px 3px; }
.check input { margin: 0; display: block; }
.color { display: flex; align-items: center; gap: 9px; height: 20px; padding-left: 3px; }
.color i { width: 11px; height: 16px; border: 1px solid #000; background: #fff; }
.props input[type="text"], .dim-btn { width: 160px; height: 30px; padding: 0 6px; border: 1px solid #c4c4c4; border-radius: 4px; background: #fff; color: #444; font: inherit; outline: 0; }
.props .dim-btn { height: 26px; justify-items: start; }
.props input[type="text"]:focus { border-color: #6ab4ec; box-shadow: 0 0 5px #8ccaf5; }
.props ::selection { background: #3297fd; color: #fff; }
.select { display: grid; align-items: center; }
.select > * { grid-area: 1 / 1; }
.select select { appearance: none; width: 59px; height: 24px; padding: 0 3px; border: 1px solid #c4c4c4; border-radius: 3px; background: #fff; color: #444; font: inherit; }
.select svg { width: 5px; height: 4px; justify-self: end; margin-right: 7px; fill: #444; pointer-events: none; }

/* Downloads shelf */
.downloads { flex: none; display: flex; align-items: center; height: 49px; padding: 0 12px 0 4px; border-top: 1px solid #c9c9c9; background: #f1f1f1; }
.file { display: flex; align-items: center; width: 227px; height: 36px; padding: 0 18px 0 16px; border-right: 1px solid #c4c4c4; font-size: 13px; line-height: 20px; }
.file > svg { width: 16px; height: 14px; }
.file a { flex: 1; margin-left: 13px; padding-top: 4px; }
.file button svg { width: 10px; height: 6px; }
.all { height: 28px; padding: 0 15px; margin-left: auto; border: 1px solid #d6d6d6; border-radius: 2px; }
.dismiss { margin-left: 12px; color: #555; }
.dismiss svg { width: 12px; height: 12px; }

/* Taskbar */
.taskbar { position: relative; flex: none; display: flex; align-items: center; height: 40px; padding: 0 18px 0 11px; background: linear-gradient(90deg, #27b6c3 0, #34b9ba 9%, #4bbca8 17%, #4fbba6 36%, #418fc1 38%, #3f8ac0 55%, #469cc6 75%, #489fc9 94%, #3b7dba 100%); color: #fff; }
.wall { position: absolute; left: 0; top: 0; width: 100%; height: 40px; }
.taskbar > :not(.wall) { position: relative; }
.start svg { width: 26px; height: 26px; }
.grip { width: 9px; height: 30px; margin: 0 8px 0 13px; background: repeating-linear-gradient(#135a74 0 2px, transparent 2px 4px); mask-image: repeating-linear-gradient(90deg, #000 0 2px, transparent 2px 3px); }
.apps { display: flex; gap: 2px; height: 40px; }
.apps button { width: 60px; height: 40px; }
.apps svg { width: 30px; height: 30px; }
.apps .run { border: 1px solid #ffffff80; background: #ffffff38; box-shadow: inset 0 0 0 1px #ffffff20; }
.apps .on { border: 2px solid #ffffffc0; background: #ffffff70; }
.apps .multi { box-shadow: inset -4px 0 0 -1px #ffffff50; }
.ps { font: 700 14px "Open Sans", sans-serif; fill: #8cc8ff; }
.line { font: 700 7px "Open Sans", sans-serif; fill: #00b900; }
.en { font: 700 14px "Open Sans", sans-serif; fill: #fff; }
.kbd { margin-left: auto; margin-right: 76px; }
.kbd svg { width: 32px; height: 20px; }
.tray { display: flex; align-items: center; gap: 8px; }
.tray svg { width: 16px; height: 16px; }
.tray .up { width: 8px; height: 5px; margin-right: 4px; }
.ime { font-size: 14px; margin-left: 4px; }
time { text-align: center; margin-left: 2px; padding-top: 2px; }
```
FILE: app.js
```js
const textField = document.getElementById("txt");
textField.focus({ preventScroll: true });
textField.select();
```
